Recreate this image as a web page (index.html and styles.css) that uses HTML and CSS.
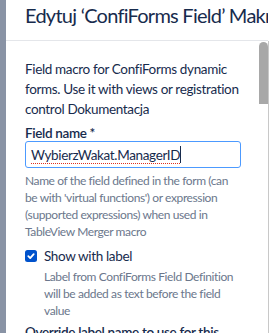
FILE: index.html
```html
<!DOCTYPE html>
<html lang="pl">
<head>
  <meta charset="UTF-8" />
  <title>Edytuj makro</title>
  <link rel="stylesheet" href="styles.css">
</head>
<body>
  <div class="backdrop"></div>
  <div class="dialog">
    <div class="dialog-header">
      <h2 class="dialog-title">Edytuj ‘ConfiForms Field’ Makro</h2>
    </div>
    <div class="dialog-main">
      <div class="dialog-body">
        <p class="intro">Field macro for ConfiForms dynamic forms. Use it with views or registration control <a href="#">Dokumentacja</a></p>

        <div class="field">
          <label class="field-label">Field name *</label>
          <div class="text-input"><span class="spell">WybierzWakat.ManagerID</span><span class="caret"></span></div>
          <div class="hint">Name of the field defined in the form (can be with 'virtual functions') or expression (<a href="#">supported expressions</a>) when used in TableView Merger macro</div>
        </div>

        <div class="check-row">
          <span class="checkbox">
            <svg width="12" height="12" viewBox="0 0 12 12"><rect width="12" height="12" rx="2.5" fill="#0052cc"/><path d="M3.3 6.2l1.9 1.9 3.5-3.9" fill="none" stroke="#fff" stroke-width="1.8" stroke-linecap="round" stroke-linejoin="round"/></svg>
          </span>
          <div>
            <div class="check-label">Show with label</div>
            <div class="hint">Label from ConfiForms Field Definition will be added as text before the field value</div>
          </div>
        </div>

        <div class="field field-next">
          <label class="field-label">Override label name to use for this field</label>
        </div>
      </div>
      <div class="scrollbar"><div class="thumb"></div></div>
      <div class="side-edge"></div>
    </div>
  </div>
</body>
</html>
```

FILE: styles.css
```css
body {
  margin: 0;
  height: 333px;
  overflow: hidden;
  display: flex;
  font-family: Lato, 'Noto Sans', sans-serif;
  color: #172b4d;
  background: #fff;
  letter-spacing: -0.35px;
}
.backdrop {
  width: 6px;
  flex-shrink: 0;
  background: #8993a5;
}
.dialog {
  flex: 1;
  min-width: 0;
  display: flex;
  flex-direction: column;
  background: #fff;
}
.dialog-header {
  height: 40px;
  flex-shrink: 0;
  border-bottom: 1px solid #e4e6ea;
  padding-left: 19px;
  overflow: hidden;
  margin-right: 1px;
}
.dialog-title {
  margin: 0;
  padding-top: 2px;
  font-size: 20px;
  line-height: 26px;
  font-weight: 400;
  letter-spacing: -0.75px;
  white-space: nowrap;
  color: #172b4d;
}
.dialog-main {
  flex: 1;
  display: flex;
  min-height: 0;
}
.dialog-body {
  flex: 1;
  padding: 18px 17px 0 19px;
  overflow: hidden;
}
.intro {
  margin: 0 0 6px;
  font-size: 13.5px;
  line-height: 20px;
}
a {
  color: #172b4d;
  text-decoration: none;
}
.field-label {
  display: block;
  font-size: 13.5px;
  line-height: 16px;
  font-weight: 600;
}
.text-input {
  height: 25px;
  border: 1px solid #4c9aff;
  border-radius: 3px;
  padding: 0 5px;
  display: flex;
  align-items: center;
  font-size: 13.5px;
}
.spell {
  text-decoration: underline dotted #e0301e;
  text-decoration-thickness: 1px;
  text-underline-offset: 3px;
}
.caret {
  width: 1px;
  height: 17px;
  background: #172b4d;
}
.hint {
  margin-top: 4px;
  font-size: 12px;
  line-height: 17px;
  letter-spacing: -0.4px;
  color: #6b778c;
}
.hint a {
  color: #6b778c;
}
.check-row {
  display: flex;
  gap: 7px;
  margin-top: 6px;
}
.checkbox {
  flex-shrink: 0;
  height: 20px;
  display: flex;
  align-items: center;
}
.check-label {
  font-size: 13.5px;
  line-height: 20px;
}
.check-row .hint {
  margin-top: 2px;
}
.field-next {
  margin-top: 5px;
}
.scrollbar {
  width: 10px;
  flex-shrink: 0;
}
.thumb {
  margin-top: 1px;
  margin-left: 1px;
  width: 9px;
  height: 62px;
  background: #a8a8a8;
  border-radius: 5px 5px 0 0;
}
.side-edge {
  width: 1px;
  flex-shrink: 0;
  background: #c8c8c8;
}
```
